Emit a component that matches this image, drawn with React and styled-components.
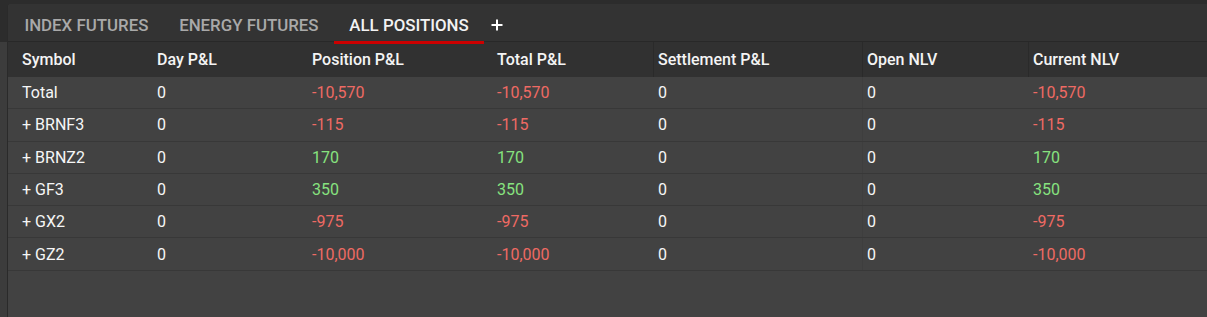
import React from 'react'
import styled, { createGlobalStyle } from 'styled-components'

const tabs = ['INDEX FUTURES', 'ENERGY FUTURES', 'ALL POSITIONS']

const columns = [
    { key: 'symbol', label: 'Symbol' },
    { key: 'day', label: 'Day P&L' },
    { key: 'position', label: 'Position P&L', signed: true },
    { key: 'total', label: 'Total P&L', signed: true },
    { key: 'settlement', label: 'Settlement P&L', divider: true },
    { key: 'openNlv', label: 'Open NLV', divider: true, rowDivider: true },
    { key: 'currentNlv', label: 'Current NLV', signed: true, divider: true },
]

const rows = [
    { symbol: 'Total', pl: -10570 },
    { symbol: '+ BRNF3', pl: -115 },
    { symbol: '+ BRNZ2', pl: 170 },
    { symbol: '+ GF3', pl: 350 },
    { symbol: '+ GX2', pl: -975 },
    { symbol: '+ GZ2', pl: -10000 },
]

const fmt = (n) => n.toLocaleString('en-US')

const App = () => {
    return (
        <>
            <GlobalStyle />
            <Page>
                <SideEdge>
                    <SideTop />
                </SideEdge>
                <Panel>
                    <TabBar>
                        {tabs.map((t, i) => (
                            <Tab key={t} active={i === 2}>{t}</Tab>
                        ))}
                        <AddTab>
                            <svg width="12" height="12" viewBox="0 0 12 12">
                                <path d="M6 0.5v11M0.5 6h11" stroke="#ffffff" strokeWidth="2" />
                            </svg>
                        </AddTab>
                    </TabBar>
                    <HeaderRow>
                        {columns.map((c) => (
                            <HeadCell key={c.key} divider={c.divider}>{c.label}</HeadCell>
                        ))}
                    </HeaderRow>
                    {rows.map((r) => (
                        <Row key={r.symbol}>
                            {columns.map((c) => {
                                if (c.key === 'symbol') return <Cell key={c.key}>{r.symbol}</Cell>
                                if (c.signed) {
                                    return (
                                        <Cell key={c.key} tone={r.pl < 0 ? 'neg' : 'pos'}>
                                            {fmt(r.pl)}
                                        </Cell>
                                    )
                                }
                                return <Cell key={c.key} divider={c.rowDivider}>0</Cell>
                            })}
                        </Row>
                    ))}
                </Panel>
            </Page>
        </>
    )
}

export default App

// CSS

const GlobalStyle = createGlobalStyle`
body {
    margin: 0;
    background: #2c2c2c;
    font-family: Roboto, "Liberation Sans", sans-serif;
}
`

const Page = styled.div`
display: flex;
height: 317px;
padding-top: 4px;
box-sizing: border-box;
overflow: hidden;
`

const SideEdge = styled.div`
width: 7px;
background: #3c3c3c;
display: flex;
flex-direction: column;
`

const SideTop = styled.div`
height: 38px;
background: #2c2c2c;
`

const Panel = styled.div`
flex: 1;
background: #424242;
border-left: 1px solid #2a2a2a;
border-top-left-radius: 4px;
overflow: hidden;
`

const TabBar = styled.div`
height: 37px;
display: flex;
align-items: stretch;
padding-left: 1px;
background: #333333;
border-bottom: 1px solid #282828;
`

const Tab = styled.div`
position: relative;
display: flex;
align-items: center;
padding: 4px 15.4px 0;
font-size: 16.85px;
font-weight: 500;
color: ${(p) => (p.active ? '#f2f2f2' : '#a9a9a9')};
white-space: nowrap;
&::after {
    content: '';
    display: ${(p) => (p.active ? 'block' : 'none')};
    position: absolute;
    left: 0;
    right: 0;
    bottom: -3px;
    height: 3px;
    background: #cc0000;
    z-index: 2;
}
`

const AddTab = styled.div`
display: flex;
align-items: center;
padding: 4px 0 0 7px;
`

const grid = `
display: grid;
grid-template-columns: 135px 155px 185px 161px 209px 166px 1fr;
padding-left: 9px;
`

const HeaderRow = styled.div`
${grid}
height: 35px;
background: #313131;
`

const HeadCell = styled.div`
display: flex;
align-items: center;
padding-left: 4px;
font-size: 16px;
font-weight: 500;
color: #f4f4f4;
border-left: 1px solid ${(p) => (p.divider ? '#2a2a2a' : 'transparent')};
white-space: nowrap;
`

const Row = styled.div`
${grid}
height: 31.3px;
background: #424242;
border-bottom: 1px solid #383838;
`

const Cell = styled.div`
display: flex;
align-items: center;
padding-left: 4px;
font-size: 16px;
color: ${(p) => (p.tone === 'neg' ? '#ef6a64' : p.tone === 'pos' ? '#87e27f' : '#f6f6f6')};
border-left: 1px solid ${(p) => (p.divider ? '#3e3e3e' : 'transparent')};
white-space: nowrap;
`
